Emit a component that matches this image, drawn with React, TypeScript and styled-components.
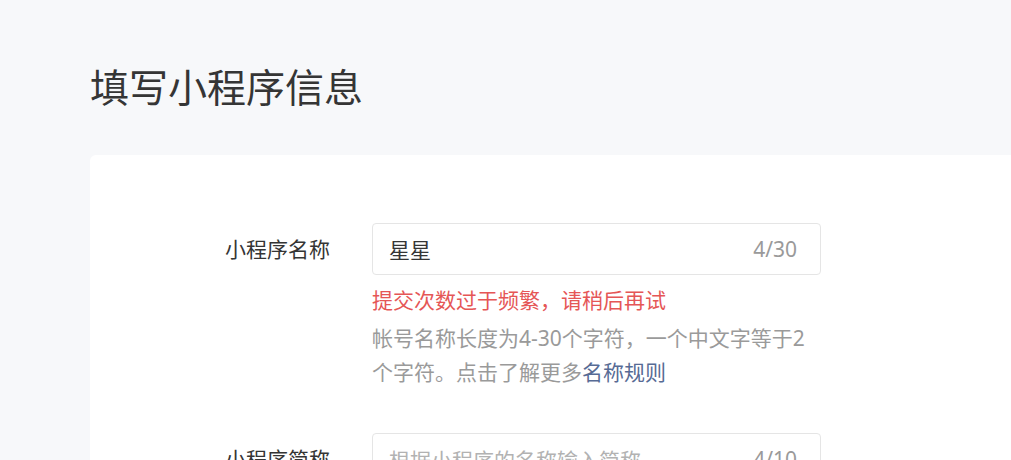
import React from "react";
import styled, { createGlobalStyle } from "styled-components";

const Global = createGlobalStyle`
  html, body { margin: 0; padding: 0; background: #f7f8fa; }
  body { font-family: "Noto Sans", "Noto Sans CJK SC", sans-serif; overflow: hidden; }
`;

const Page = styled.div`
  padding: 59px 0 0 90px;
  height: 460px;
  box-sizing: border-box;
`;

const Title = styled.h1`
  margin: 0 0 41px;
  font-size: 39px;
  line-height: 55px;
  font-weight: 400;
  color: #353535;
`;

const Card = styled.div`
  background: #fff;
  border-radius: 6px 0 0 0;
  padding: 68px 0 0 135px;
  min-height: 400px;
`;

const Row = styled.div`
  display: flex;
  align-items: flex-start;
  margin-bottom: 44px;
`;

const Label = styled.div`
  width: 147px;
  flex-shrink: 0;
  font-size: 21px;
  line-height: 52px;
  color: #353535;
`;

const Field = styled.div`
  width: 449px;
`;

const InputBox = styled.div`
  height: 52px;
  box-sizing: border-box;
  border: 1px solid #e5e5e5;
  border-radius: 4px;
  display: flex;
  align-items: center;
  padding: 0 23px 0 16px;
  font-size: 21px;
`;

const Value = styled.span<{ $placeholder?: boolean }>`
  flex: 1;
  color: ${(p) => (p.$placeholder ? "#b2b2b2" : "#353535")};
`;

const Counter = styled.span`
  color: #9a9a9a;
`;

const Error = styled.div`
  margin-top: 8px;
  font-size: 21px;
  line-height: 34px;
  color: #e55656;
`;

const Help = styled.div`
  margin-top: 4px;
  font-size: 21px;
  line-height: 34px;
  color: #9a9a9a;
`;

const Link = styled.a`
  color: #576b95;
  text-decoration: none;
`;

export default function App() {
  return (
    <>
      <Global />
      <Page>
        <Title>填写小程序信息</Title>
        <Card>
          <Row>
            <Label>小程序名称</Label>
            <Field>
              <InputBox>
                <Value>星星</Value>
                <Counter>4/30</Counter>
              </InputBox>
              <Error>提交次数过于频繁，请稍后再试</Error>
              <Help>
                帐号名称长度为4-30个字符，一个中文字等于2个字符。点击了解更多
                <Link href="#">名称规则</Link>
              </Help>
            </Field>
          </Row>
          <Row>
            <Label>小程序简称</Label>
            <Field>
              <InputBox>
                <Value $placeholder>根据小程序的名称输入简称</Value>
                <Counter>4/10</Counter>
              </InputBox>
            </Field>
          </Row>
        </Card>
      </Page>
    </>
  );
}
